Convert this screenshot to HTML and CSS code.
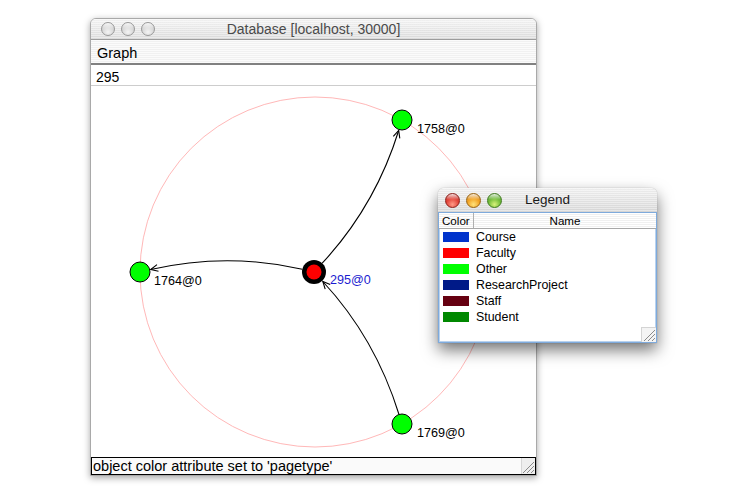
FILE: index.html
```html
<!DOCTYPE html>
<html>
<head>
<meta charset="utf-8">
<link rel="stylesheet" href="styles.css">
</head>
<body>
<div class="desk">
  <div class="win main">
    <div class="titlebar">
      <div class="lights">
        <span class="light gray"></span><span class="light gray"></span><span class="light gray"></span>
      </div>
      <div class="title">Database [localhost, 30000]</div>
      <div></div>
    </div>
    <div class="menubar"><span class="menu">Graph</span></div>
    <div class="field">295</div>
    <div class="canvas">
      <svg class="graph" width="445" height="371" viewBox="91 86 445 371">
        <circle cx="315" cy="272" r="175" fill="none" stroke="#ffb8b8" stroke-width="1"/>
        <g fill="none" stroke="#000" stroke-width="1.1">
          <path d="M322.2,263.2 Q375.3,206 398.7,130.5"/>
          <polyline points="393.3,136.4 398.7,130.5 399.8,138.4"/>
          <path d="M302.3,269.3 Q227,252 150.7,269.5"/>
          <polyline points="158.5,271.2 150.7,269.5 157.0,264.6"/>
          <path d="M399,414.5 Q375.3,338 322.8,281.5"/>
          <polyline points="325.2,289.1 322.8,281.5 330.2,284.5"/>
        </g>
        <circle cx="402" cy="120" r="10" fill="#00ff00" stroke="#000"/>
        <circle cx="140" cy="272" r="10" fill="#00ff00" stroke="#000"/>
        <circle cx="402" cy="424" r="10" fill="#00ff00" stroke="#000"/>
        <circle cx="314" cy="272" r="12" fill="#000"/>
        <circle cx="314" cy="272" r="7.5" fill="#ff0000"/>
        <g class="lbl">
          <text x="417" y="133">1758@0</text>
          <text x="154" y="285">1764@0</text>
          <text x="417" y="437">1769@0</text>
          <text x="330" y="284" class="sel">295@0</text>
        </g>
      </svg>
    </div>
    <div class="status">
      <span class="status-text">object color attribute set to 'pagetype'</span>
      <span class="grip">
        <svg width="13" height="15" viewBox="0 0 13 15"><g stroke="#8a8a8a" stroke-width="1"><line x1="12" y1="3" x2="1" y2="14"/><line x1="12" y1="7" x2="5" y2="14"/><line x1="12" y1="11" x2="9" y2="14"/></g></svg>
      </span>
    </div>
  </div>

  <div class="win legend">
    <div class="titlebar ltitle">
      <div class="lights llights">
        <span class="light red"></span><span class="light yellow"></span><span class="light green"></span>
      </div>
      <div class="title dark">Legend</div>
      <div></div>
    </div>
    <div class="lcontent">
      <div class="lhead">
        <div class="hcolor">Color</div>
        <div class="hname">Name</div>
      </div>
      <div class="row"><span class="sw" style="background:#0033cc"></span><span>Course</span></div>
      <div class="row"><span class="sw" style="background:#ff0000"></span><span>Faculty</span></div>
      <div class="row"><span class="sw" style="background:#00ff00"></span><span>Other</span></div>
      <div class="row"><span class="sw" style="background:#001a88"></span><span>ResearchProject</span></div>
      <div class="row"><span class="sw" style="background:#660011"></span><span>Staff</span></div>
      <div class="row"><span class="sw" style="background:#008800"></span><span>Student</span></div>
      <span class="grip lgrip">
        <svg width="14" height="14" viewBox="0 0 14 14"><g stroke="#8a8a8a" stroke-width="1"><line x1="13" y1="2" x2="2" y2="13"/><line x1="13" y1="6" x2="6" y2="13"/><line x1="13" y1="10" x2="10" y2="13"/></g></svg>
      </span>
    </div>
  </div>
</div>
</body>
</html>
```

FILE: styles.css
```css
html, body {
  margin: 0;
  padding: 0;
  background: #ffffff;
}

.desk {
  position: relative;
  width: 750px;
  height: 497px;
  overflow: hidden;
  font-family: "Liberation Sans", "DejaVu Sans", sans-serif;
  color: #000;
}

.win {
  position: absolute;
  box-sizing: border-box;
  display: flex;
  flex-direction: column;
}

.main {
  left: 90px;
  top: 18px;
  width: 447px;
  border: 1px solid #a9a9a9;
  border-radius: 6px 6px 0 0;
  background: #fff;
  box-shadow: 0 2px 7px rgba(0, 0, 0, 0.35);
}

.titlebar {
  height: 20px;
  border-bottom: 1px solid #9c9c9c;
  border-radius: 5px 5px 0 0;
  background:
    repeating-linear-gradient(to bottom, rgba(255,255,255,0.35) 0, rgba(255,255,255,0.35) 1px, rgba(0,0,0,0.02) 1px, rgba(0,0,0,0.02) 2px),
    linear-gradient(to bottom, #f6f6f6, #dedede);
  display: grid;
  grid-template-columns: 1fr auto 1fr;
  align-items: center;
}

.lights {
  display: flex;
  gap: 6px;
  padding-left: 10px;
}

.light {
  display: block;
  box-sizing: border-box;
  width: 14px;
  height: 14px;
  border-radius: 50%;
}

.gray {
  border: 1px solid #999;
  background:
    linear-gradient(to bottom, rgba(255,255,255,0.9) 0, rgba(255,255,255,0) 50%),
    radial-gradient(circle at 50% 75%, #f4f4f4 0, #d6d6d6 55%, #b4b4b4 100%);
}

.title {
  font-size: 14px;
  color: #4a4a4a;
  white-space: nowrap;
  line-height: 20px;
}

.title.dark {
  font-size: 13.5px;
  color: #1a1a1a;
}

.menubar {
  box-sizing: border-box;
  height: 23px;
  border-bottom: 2px solid #818181;
  background: repeating-linear-gradient(to bottom, #fbfbfb 0, #fbfbfb 1px, #f1f1f1 1px, #f1f1f1 2px);
  display: flex;
  align-items: center;
  padding: 2px 0 0 6px;
  height: 25px;
}

.menu {
  font-size: 14.5px;
}

.field {
  box-sizing: border-box;
  height: 21px;
  border-bottom: 1px solid #cdcdcd;
  font-size: 14px;
  line-height: 20px;
  padding: 2px 0 0 5px;
  background: #fff;
}

.canvas {
  height: 371px;
  background: #fff;
}

.graph {
  display: block;
}

.lbl text {
  font-family: "Liberation Sans", sans-serif;
  font-size: 12.6px;
  fill: #000;
}

.lbl text.sel {
  fill: #1c1cd0;
}

.status {
  box-sizing: border-box;
  height: 18px;
  border: 1px solid #000;
  display: flex;
  align-items: center;
  justify-content: space-between;
  background: #fafafa;
}

.status-text {
  font-size: 14.5px;
  padding-left: 1px;
  line-height: 16px;
  white-space: nowrap;
}

.grip {
  display: flex;
  align-items: flex-end;
  justify-content: flex-end;
  background: #eeeeee;
  border-left: 1px solid #d6d6d6;
  height: 16px;
  width: 13px;
}

.grip svg {
  display: block;
}

/* Legend window */
.legend {
  left: 438px;
  top: 188px;
  width: 219px;
  height: 155px;
  border-radius: 6px 6px 0 0;
  background: #fff;
  box-shadow: 0 7px 16px rgba(0, 0, 0, 0.55), 0 0 1px rgba(0,0,0,0.4);
}

.ltitle {
  height: 24px;
  border: none;
  border-radius: 6px 6px 0 0;
  background:
    repeating-linear-gradient(to bottom, rgba(255,255,255,0.35) 0, rgba(255,255,255,0.35) 1px, rgba(0,0,0,0.02) 1px, rgba(0,0,0,0.02) 2px),
    linear-gradient(to bottom, #f2f2f2, #d9d9d9);
}

.llights {
  padding-left: 7px;
  gap: 6px;
}

.llights .light {
  width: 15px;
  height: 15px;
}

.red {
  border: 1px solid #8c1e18;
  background:
    linear-gradient(to bottom, rgba(255,255,255,0.85) 0, rgba(255,255,255,0) 45%),
    radial-gradient(circle at 50% 80%, #ff9a86 0, #e2443a 50%, #a81a14 100%);
}

.yellow {
  border: 1px solid #9a6410;
  background:
    linear-gradient(to bottom, rgba(255,255,255,0.85) 0, rgba(255,255,255,0) 45%),
    radial-gradient(circle at 50% 80%, #ffe27a 0, #f2a324 50%, #b86e0c 100%);
}

.green {
  border: 1px solid #3e7a1c;
  background:
    linear-gradient(to bottom, rgba(255,255,255,0.85) 0, rgba(255,255,255,0) 45%),
    radial-gradient(circle at 50% 80%, #d8f27a 0, #72bc3a 50%, #3c8a1c 100%);
}

.lcontent {
  flex: 1;
  border: 1px solid #7eaadc;
  box-shadow: inset 0 0 0 1px #b9d2ee;
  display: flex;
  flex-direction: column;
}

.lhead {
  display: flex;
  height: 15px;
  border-bottom: 1px solid #a8a8a8;
  font-size: 11.6px;
  line-height: 15px;
  background: repeating-linear-gradient(to bottom, #ffffff 0, #ffffff 1px, #f0f0f0 1px, #f0f0f0 2px);
}

.hcolor {
  width: 35px;
  box-sizing: border-box;
  border-right: 1px solid #b0b0b0;
  padding-left: 3px;
}

.hname {
  flex: 1;
  text-align: center;
}

.row {
  height: 16px;
  display: flex;
  align-items: center;
  gap: 7px;
  padding-left: 4px;
  font-size: 12.4px;
}

.sw {
  display: block;
  width: 26px;
  height: 10px;
}

.lgrip {
  margin-top: auto;
  align-self: flex-end;
  height: 14px;
  width: 14px;
  border-left: 1px solid #d4d4d4;
  border-top: 1px solid #d4d4d4;
  background: #f4f4f4;
}
```
